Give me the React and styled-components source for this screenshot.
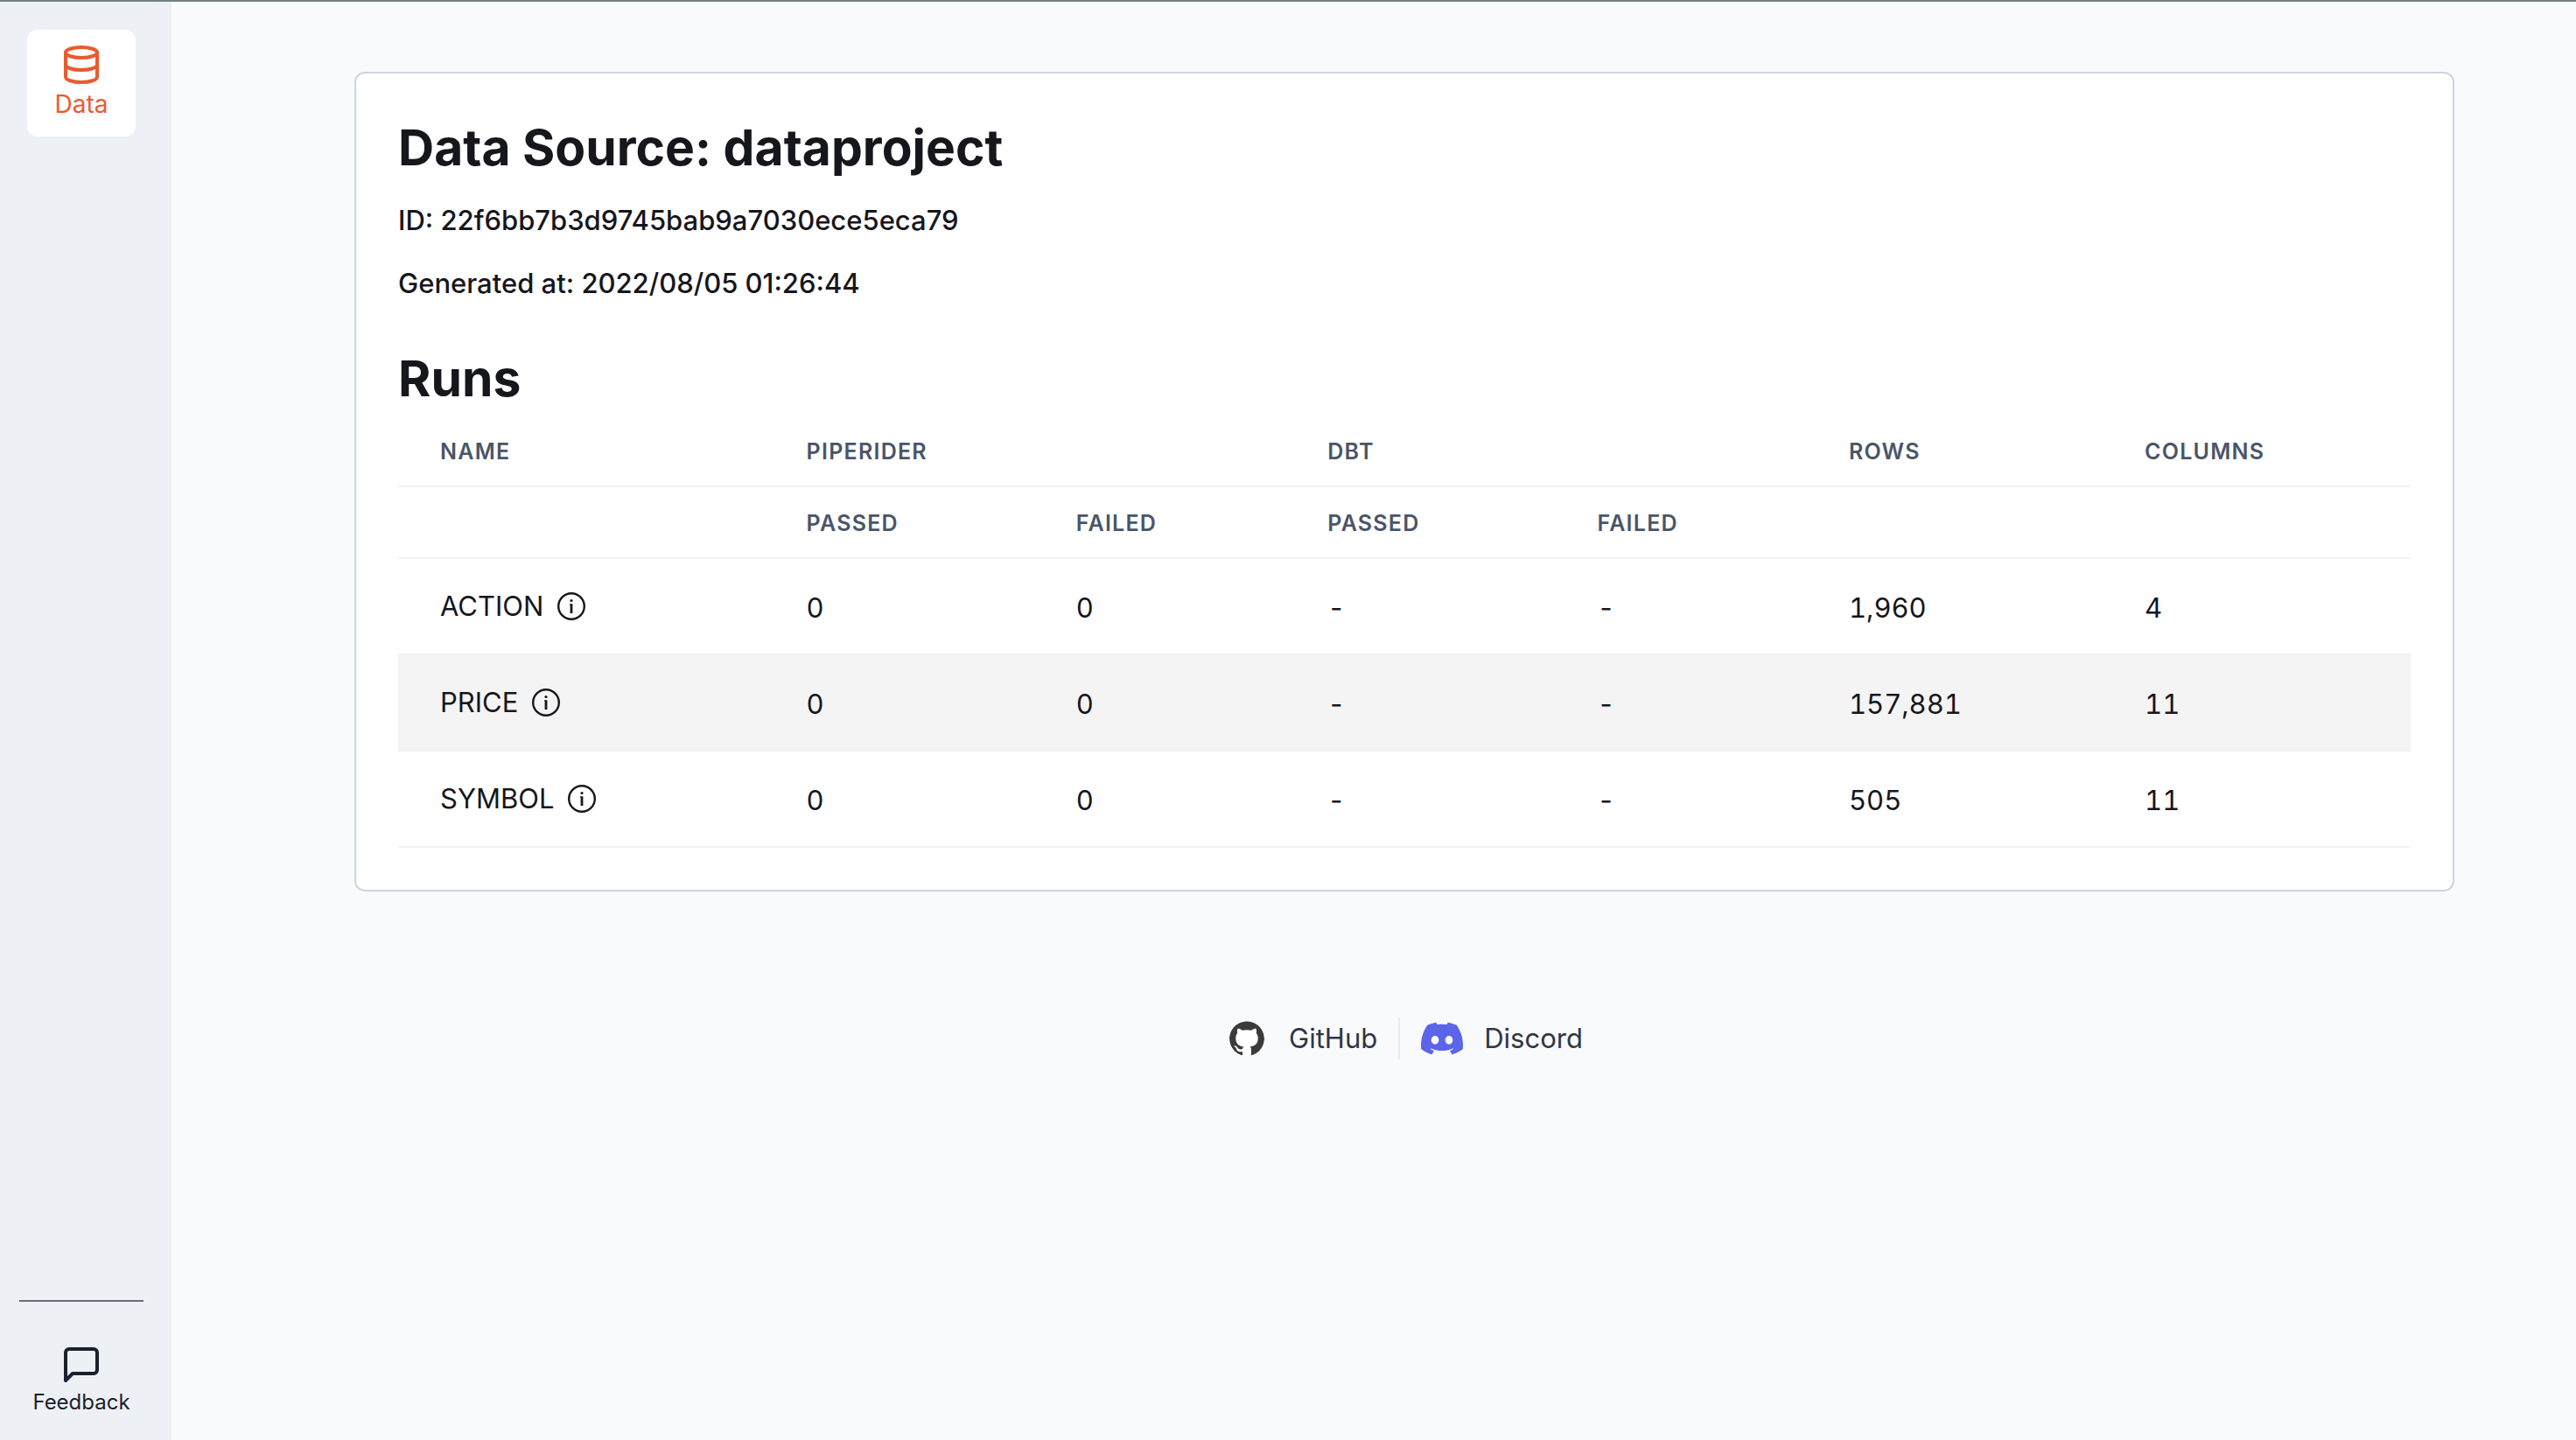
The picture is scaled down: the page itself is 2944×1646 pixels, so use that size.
import React from "react";
import styled, { createGlobalStyle } from "styled-components";
import { FiDatabase, FiMessageSquare } from "react-icons/fi";
import { SiGithub, SiDiscord } from "react-icons/si";

const GlobalStyle = createGlobalStyle`
  *, *::before, *::after { box-sizing: border-box; }
  body {
    margin: 0;
    background: #f9fafc;
    color: #16161d;
    font-family: Inter, "Liberation Sans", sans-serif;
    font-size: 31px;
    line-height: 48px;
  }
  h1, h2, p { margin: 0; }
`;

const Page = styled.div`
  display: flex;
  min-height: 100vh;
  border-top: 2px solid #718083;
`;

const Sidebar = styled.nav`
  width: 196px;
  padding: 32px 10px 24px 0;
  display: flex;
  flex-direction: column;
  align-items: center;
  justify-content: space-between;
  background: #edf1f6;
`;

const NavItem = styled.a`
  width: 124px;
  height: 122px;
  padding-top: 16px;
  display: flex;
  flex-direction: column;
  align-items: center;
  border-radius: 12px;
  background: #fff;
  color: #eb5a2f;
  font-size: 28px;
  line-height: 42px;
  text-decoration: none;
`;

const SidebarFooter = styled.div`
  width: 142px;
  padding-top: 48px;
  border-top: 2px solid #6b7078;
  display: flex;
  justify-content: center;
`;

const FeedbackLink = styled.a`
  display: flex;
  flex-direction: column;
  align-items: center;
  color: #1a202c;
  font-size: 24px;
  line-height: 38px;
  text-decoration: none;
`;

const Main = styled.main`
  flex: 1;
  padding: 80px 139px 80px 209px;
  display: flex;
  flex-direction: column;
  align-items: center;
  gap: 144px;
`;

const Card = styled.section`
  width: 100%;
  padding: 48px;
  border: 2px solid #cbd5e0;
  border-radius: 12px;
  background: #fff;
`;

const Title = styled.h1`
  font-size: 57px;
  line-height: 74px;
  font-weight: 700;
`;

const Details = styled.div`
  display: flex;
  flex-direction: column;
  gap: 24px;
  padding: 22px 0 48px;
  font-weight: 500;
`;

const Table = styled.table`
  width: 100%;
  margin-top: 4px;
  table-layout: fixed;
  border-collapse: collapse;
  text-align: left;
`;

const Column = styled.col`
  width: ${(p) => p.$share}%;
`;

const HeadCell = styled.th`
  height: 82px;
  padding: 2px 48px 0;
  border-bottom: 2px solid #edf2f7;
  color: #4a5568;
  font-size: 25px;
  line-height: 32px;
  font-weight: 600;
  letter-spacing: 0.05em;
  text-transform: uppercase;
`;

const Row = styled.tr`
  background: ${(p) => (p.$active ? "#f4f4f4" : "transparent")};
`;

const Cell = styled.td`
  height: 110px;
  padding: 0 48px;
  border-bottom: 2px solid #edf2f7;
`;

const NumberCell = styled(Cell)`
  padding-top: 4px;
  font-variant-numeric: tabular-nums;
`;

const Name = styled.div`
  display: flex;
  align-items: center;
  gap: 16px;
`;

const Links = styled.footer`
  display: flex;
  align-items: center;
`;

const ExternalLink = styled.a`
  display: flex;
  align-items: center;
  gap: 24px;
  padding: 0 24px;
  color: #2d3748;
  text-decoration: none;

  & + & { border-left: 2px solid #e8ebf3; }
`;

const Logo = styled.span`
  width: 48px;
  height: 48px;
  display: flex;
  align-items: center;
  justify-content: center;
  color: ${(p) => p.$color};
`;

const GithubMark = styled(SiGithub)`
  border-radius: 50%;
  background: #fff;
`;

const InfoIcon = () => (
  <svg width="32" height="32" viewBox="0 0 32 32" aria-hidden="true">
    <circle cx="16" cy="16" r="14.8" fill="none" stroke="currentColor" strokeWidth="2.4" />
    <circle cx="16" cy="9.5" r="1.6" fill="currentColor" />
    <path d="M14 13.2h3.4V24h-2.8v-9.6H14z" fill="currentColor" />
  </svg>
);

const runs = [
  { name: "ACTION", rows: "1,960", columns: 4 },
  { name: "PRICE", rows: "157,881", columns: 11, active: true },
  { name: "SYMBOL", rows: "505", columns: 11 },
];

const columnShares = [18.2, 13.4, 12.5, 13.4, 12.5, 14.7, 15.3];

export default function App() {
  return (
    <>
      <GlobalStyle />
      <Page>
        <Sidebar>
          <NavItem href="#data">
            <FiDatabase size={48} />
            Data
          </NavItem>
          <SidebarFooter>
            <FeedbackLink href="#feedback">
              <FiMessageSquare size={48} />
              Feedback
            </FeedbackLink>
          </SidebarFooter>
        </Sidebar>
        <Main>
          <Card>
            <Title>Data Source: dataproject</Title>
            <Details>
              <p>ID: 22f6bb7b3d9745bab9a7030ece5eca79</p>
              <p>Generated at: 2022/08/05 01:26:44</p>
            </Details>
            <Title as="h2">Runs</Title>
            <Table>
              <colgroup>
                {columnShares.map((share, i) => (
                  <Column key={i} $share={share} />
                ))}
              </colgroup>
              <thead>
                <tr>
                  <HeadCell>Name</HeadCell>
                  <HeadCell colSpan={2}>PipeRider</HeadCell>
                  <HeadCell colSpan={2}>dbt</HeadCell>
                  <HeadCell>Rows</HeadCell>
                  <HeadCell>Columns</HeadCell>
                </tr>
                <tr>
                  <HeadCell />
                  <HeadCell>Passed</HeadCell>
                  <HeadCell>Failed</HeadCell>
                  <HeadCell>Passed</HeadCell>
                  <HeadCell>Failed</HeadCell>
                  <HeadCell />
                  <HeadCell />
                </tr>
              </thead>
              <tbody>
                {runs.map((run) => (
                  <Row key={run.name} $active={run.active}>
                    <Cell>
                      <Name>
                        {run.name}
                        <InfoIcon />
                      </Name>
                    </Cell>
                    <NumberCell>0</NumberCell>
                    <NumberCell>0</NumberCell>
                    <NumberCell>-</NumberCell>
                    <NumberCell>-</NumberCell>
                    <NumberCell>{run.rows}</NumberCell>
                    <NumberCell>{run.columns}</NumberCell>
                  </Row>
                ))}
              </tbody>
            </Table>
          </Card>
          <Links>
            <ExternalLink href="#github">
              <Logo $color="#3b3b3b">
                <GithubMark size={40} />
              </Logo>
              GitHub
            </ExternalLink>
            <ExternalLink href="#discord">
              <Logo $color="#5b65ea">
                <SiDiscord size={48} />
              </Logo>
              Discord
            </ExternalLink>
          </Links>
        </Main>
      </Page>
    </>
  );
}
